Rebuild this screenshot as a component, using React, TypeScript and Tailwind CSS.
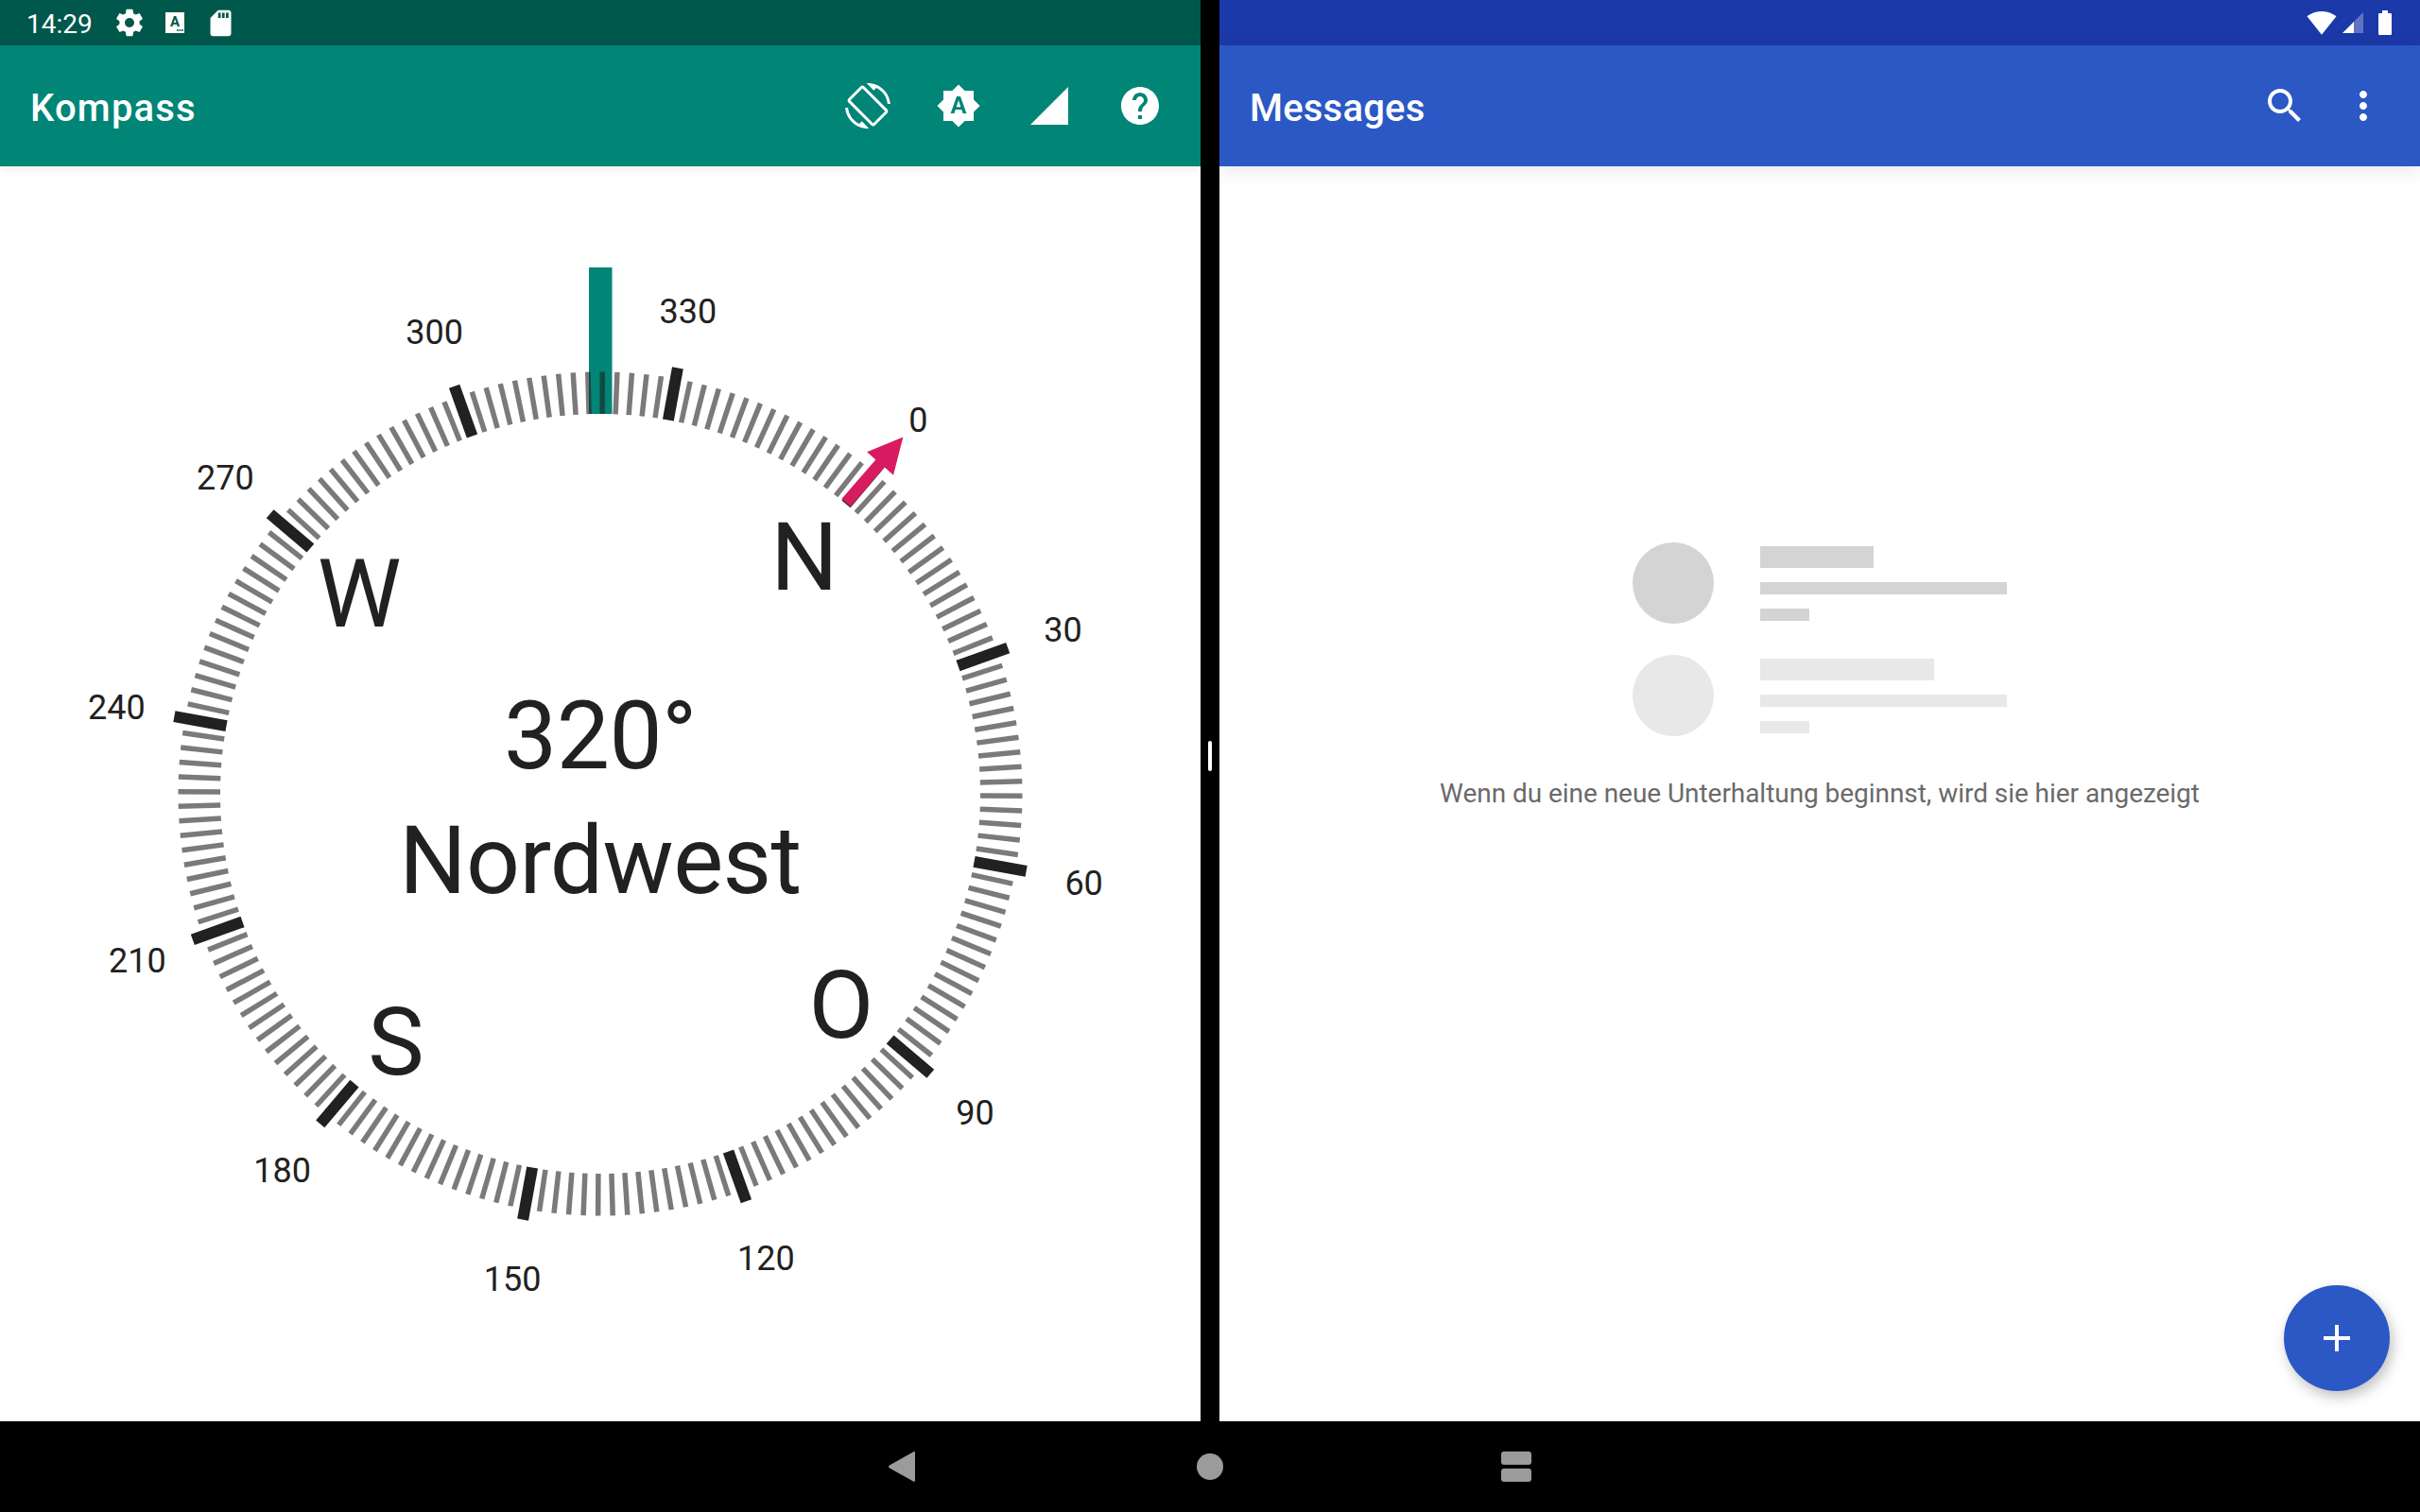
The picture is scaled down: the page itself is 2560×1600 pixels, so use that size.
import React from "react";

const FONT = "font-['Roboto',sans-serif]";
const TEAL = "#008577";

function Mi({ d, size, className = "", fill = "white" }: { d: string; size: number; className?: string; fill?: string }) {
  return (
    <svg width={size} height={size} viewBox="0 0 24 24" className={`shrink-0 ${className}`} fill={fill}>
      <path d={d} />
    </svg>
  );
}

const P = {
  settings:
    "M19.43 12.98c.04-.32.07-.64.07-.98s-.03-.66-.07-.98l2.11-1.65c.19-.15.24-.42.12-.64l-2-3.46c-.12-.22-.39-.3-.61-.22l-2.49 1c-.52-.4-1.08-.73-1.69-.98l-.38-2.65C14.46 2.18 14.25 2 14 2h-4c-.25 0-.46.18-.49.42l-.38 2.65c-.61.25-1.17.59-1.69.98l-2.49-1c-.23-.09-.49 0-.61.22l-2 3.46c-.13.22-.07.49.12.64l2.11 1.65c-.04.32-.07.65-.07.98s.03.66.07.98l-2.11 1.65c-.19.15-.24.42-.12.64l2 3.46c.12.22.39.3.61.22l2.49-1c.52.4 1.08.73 1.69.98l.38 2.65c.03.24.24.42.49.42h4c.25 0 .46-.18.49-.42l.38-2.65c.61-.25 1.17-.59 1.69-.98l2.49 1c.23.09.49 0 .61-.22l2-3.46c.12-.22.07-.49-.12-.64l-2.11-1.65zM12 15.5c-1.93 0-3.5-1.57-3.5-3.5s1.57-3.5 3.5-3.5 3.5 1.57 3.5 3.5-1.57 3.5-3.5 3.5z",
  sd: "M18 2h-8L4.02 8 4 20c0 1.1.9 2 2 2h12c1.1 0 2-.9 2-2V4c0-1.1-.9-2-2-2zm-6 6h-2V4h2v4zm3 0h-2V4h2v4zm3 0h-2V4h2v4z",
  rotate:
    "M16.48 2.52c3.27 1.55 5.61 4.72 5.97 8.48h1.5C23.44 4.84 18.29 0 12 0l-.66.03 3.81 3.81 1.33-1.32zm-6.25-.77c-.59-.59-1.54-.59-2.12 0L1.75 8.11c-.59.59-.59 1.54 0 2.12l12.02 12.02c.59.59 1.54.59 2.12 0l6.36-6.36c.59-.59.59-1.54 0-2.12L10.23 1.75zm4.6 19.44L2.81 9.17l6.36-6.36 12.02 12.02-6.36 6.36zm-7.31.29C4.25 19.94 1.91 16.76 1.55 13H.05C.56 19.16 5.71 24 12 24l.66-.03-3.81-3.81-1.33 1.32z",
  auto: "M10.85 12.65h2.3L12 9l-1.15 3.65zM20 8.69V4h-4.69L12 .69 8.69 4H4v4.69L.69 12 4 15.31V20h4.69L12 23.31 15.31 20H20v-4.69L23.31 12 20 8.69zM14.3 16l-.7-2h-3.2l-.7 2H7.8L11 7h2l3.2 9h-1.9z",
  signal: "M2 22h20V2z",
  help: "M12 2C6.48 2 2 6.48 2 12s4.48 10 10 10 10-4.48 10-10S17.52 2 12 2zm1 17h-2v-2h2v2zm2.07-7.75l-.9.92C13.45 12.9 13 13.5 13 15h-2v-.5c0-1.1.45-2.1 1.17-2.83l1.24-1.26c.37-.36.59-.86.59-1.41 0-1.1-.9-2-2-2s-2 .9-2 2H8c0-2.21 1.79-4 4-4s4 1.79 4 4c0 .88-.36 1.68-.93 2.25z",
  search:
    "M15.5 14h-.79l-.28-.27C15.41 12.59 16 11.11 16 9.5 16 5.91 13.09 3 9.5 3S3 5.91 3 9.5 5.91 16 9.5 16c1.61 0 3.09-.59 4.23-1.57l.27.28v.79l5 4.99L20.49 19l-4.99-5zm-6 0C7.01 14 5 11.99 5 9.5S7.01 5 9.5 5 14 7.01 14 9.5 11.99 14 9.5 14z",
  more: "M12 8c1.1 0 2-.9 2-2s-.9-2-2-2-2 .9-2 2 .9 2 2 2zm0 2c-1.1 0-2 .9-2 2s.9 2 2 2 2-.9 2-2-.9-2-2-2zm0 6c-1.1 0-2 .9-2 2s.9 2 2 2 2-.9 2-2-.9-2-2-2z",
  wifi: "M12.01 21.49L23.64 7c-.45-.34-4.93-4-11.64-4C5.28 3 .81 6.66.36 7l11.63 14.49.01.01z",
};

const SIZE = 1200;
const C = SIZE / 2;
const ROT = 0.3;

function Dial() {
  const minor = [];
  const major = [];
  for (let b = 0; b < 360; b += 2) {
    const isMajor = b % 30 === 0;
    // bearing 320 sits at the top of the dial
    const a = ((b - 320 + ROT) * Math.PI) / 180;
    const r1 = 402;
    const r2 = isMajor ? 458 : 446.5;
    const line = (
      <line
        key={b}
        x1={C + r1 * Math.sin(a)}
        y1={C - r1 * Math.cos(a)}
        x2={C + r2 * Math.sin(a)}
        y2={C - r2 * Math.cos(a)}
        stroke="#212121"
        strokeOpacity={isMajor ? 1 : 0.6}
        strokeWidth={isMajor ? 12 : 5.5}
      />
    );
    (isMajor ? major : minor).push(line);
  }
  return (
    <svg width={SIZE} height={SIZE} viewBox={`0 0 ${SIZE} ${SIZE}`} className="absolute inset-0">
      <rect x={C - 12} y={C - 557} width={24.5} height={155} fill={TEAL} />
      {minor}
      {major}
      <g transform={`translate(${C + 260} ${C - 308}) rotate(41)`}>
        <polygon points="-6.25,0 6.25,0 6.25,-55 18.5,-55 0,-92 -18.5,-55 -6.25,-55" fill="#D81B60" />
      </g>
    </svg>
  );
}

const LABELS = [0, 30, 60, 90, 120, 150, 180, 210, 240, 270, 300, 330];
const CARDINALS: [string, number, number][] = [
  ["N", 216, -250],
  ["O", 255, 224],
  ["S", -216, 263],
  ["W", -255, -211],
];

function Compass() {
  return (
    <div className={`relative w-[1200px] h-[1200px] shrink-0 text-[#212121] ${FONT}`}>
      <Dial />
      {LABELS.map((b) => {
        const a = ((b - 320 + ROT) * Math.PI) / 180;
        const x = C + 520 * Math.sin(a);
        const y = C - 520 * Math.cos(a) + 2;
        return (
          <span
            key={b}
            className="absolute -translate-x-1/2 -translate-y-1/2 text-[36px] leading-none"
            style={{ left: x, top: y }}
          >
            {b}
          </span>
        );
      })}
      {CARDINALS.map(([t, dx, dy]) => (
        <span
          key={t}
          className="absolute -translate-x-1/2 -translate-y-1/2 text-[100px] leading-none"
          style={{ left: C + dx, top: C + dy }}
        >
          {t}
        </span>
      ))}
      <div className="absolute inset-0 flex flex-col items-center justify-center pt-[10px]">
        <div className="text-[100px] leading-[132px] tracking-[-0.5px]">320°</div>
        <div className="text-[100px] leading-[132px] tracking-[-0.6px]">Nordwest</div>
      </div>
    </div>
  );
}

function Placeholder({ color, w }: { color: string; w: string }) {
  return (
    <div className="flex items-center gap-[49px]">
      <div className={`w-[86px] h-[86px] rounded-full ${color}`} />
      <div className="w-[261px] flex flex-col items-start gap-[15px]">
        <div className={`h-[23px] ${w} ${color}`} />
        <div className={`h-[13px] w-full ${color}`} />
        <div className={`h-[13px] w-[52px] ${color}`} />
      </div>
    </div>
  );
}

export default function App() {
  return (
    <div className={`w-[2560px] h-[1600px] bg-black flex flex-col overflow-hidden ${FONT}`}>
      <div className="flex h-[1504px]">
        {/* left pane */}
        <div className="w-[1270px] flex flex-col bg-white overflow-hidden">
          <div className="h-12 bg-[#00574B] flex items-center pl-[28px] text-white">
            <span className="text-[28px] leading-none w-[92px] pt-[3px]">14:29</span>
            <Mi d={P.settings} size={34} />
            <svg width="20" height="22" viewBox="0 0 20 22" className="ml-[21px] shrink-0">
              <rect width="20" height="22" fill="white" />
              <text x="10" y="15" textAnchor="middle" fontSize="15" fontWeight="700" fontFamily="Roboto" fill="#00574B">A</text>
              <circle cx="13" cy="19" r="1" fill="#00574B" />
              <circle cx="15.5" cy="19" r="1" fill="#00574B" />
              <circle cx="18" cy="19" r="1" fill="#00574B" />
            </svg>
            <Mi d={P.sd} size={33} className="ml-[22px]" />
          </div>
          <div className="relative z-10 h-32 bg-[#008577] flex items-center pl-8 pr-10 shadow-[0_2px_10px_rgba(0,0,0,0.09)]">
            <span className="text-[40px] font-medium tracking-[1.2px] text-white flex-1 leading-none pt-[5px]">Kompass</span>
            <div className="flex gap-12">
              <Mi d={P.rotate} size={48} />
              <Mi d={P.auto} size={48} />
              <Mi d={P.signal} size={48} />
              <Mi d={P.help} size={48} />
            </div>
          </div>
          <div className="flex-1 flex items-center justify-center overflow-hidden">
            <Compass />
          </div>
        </div>

        {/* split handle */}
        <div className="w-5 flex items-center justify-center">
          <div className="w-1 h-8 mt-24 bg-white rounded-sm" />
        </div>

        {/* right pane */}
        <div className="flex-1 flex flex-col bg-white overflow-hidden">
          <div className="h-12 bg-[#1C39A9] flex items-center justify-end pr-[30px]">
            <Mi d={P.wifi} size={32} />
            <svg width="22" height="22" viewBox="0 0 22 22" className="ml-[6px] shrink-0">
              <path d="M22 0V22H12V10z" fill="white" fillOpacity="0.3" />
              <path d="M0 22L12 10V22z" fill="white" />
            </svg>
            <svg width="14" height="26" viewBox="0 0 14 26" className="ml-[16px] shrink-0">
              <path d="M4 0h6v3h3a1 1 0 0 1 1 1v21a1 1 0 0 1-1 1H1a1 1 0 0 1-1-1V4a1 1 0 0 1 1-1h3z" fill="white" />
            </svg>
          </div>
          <div className="relative z-10 h-32 bg-[#2B58C5] flex items-center pl-8 pr-9 shadow-[0_4px_20px_rgba(0,0,0,0.1)]">
            <span className="text-[40px] font-medium tracking-[0.2px] text-white flex-1 leading-none pt-[5px]">Messages</span>
            <div className="flex gap-[35px]">
              <Mi d={P.search} size={48} />
              <Mi d={P.more} size={48} />
            </div>
          </div>
          <div className="relative flex-1 flex flex-col items-center pt-[398px]">
            <div className="flex flex-col gap-[33px]">
              <Placeholder color="bg-[#d4d4d4]" w="w-[120px]" />
              <Placeholder color="bg-[#e8e8e8]" w="w-[184px]" />
            </div>
            <p className="mt-[43px] text-[28px] leading-[36px] tracking-[-0.05px] text-[#6a6a6a]">
              Wenn du eine neue Unterhaltung beginnst, wird sie hier angezeigt
            </p>
            <button className="absolute right-8 bottom-8 w-28 h-28 rounded-full bg-[#2B58C5] flex items-center justify-center shadow-[3px_6px_14px_rgba(0,0,0,0.25)]">
              <svg width="28" height="28" viewBox="0 0 28 28">
                <path d="M12 0h4v12h12v4H16v12h-4V16H0v-4h12z" fill="white" />
              </svg>
            </button>
          </div>
        </div>
      </div>

      {/* navigation bar */}
      <div className="flex-1 flex items-center justify-center">
        <svg width="28" height="32" viewBox="0 0 28 32" className="shrink-0">
          <path d="M26 .5c1-.8 2-.3 2 1v29c0 1.300-1 1.800-2 1L1 17.500c-1.300-.8-1.300-2.200 0-3z" fill="#9b9b9b" />
        </svg>
        <div className="ml-[298px] w-7 h-7 rounded-full bg-[#9b9b9b]" />
        <div className="ml-[294px] w-8 flex flex-col gap-1">
          <div className="h-[14px] rounded-[3px] bg-[#9b9b9b]" />
          <div className="h-[14px] rounded-[3px] bg-[#9b9b9b]" />
        </div>
      </div>
    </div>
  );
}
